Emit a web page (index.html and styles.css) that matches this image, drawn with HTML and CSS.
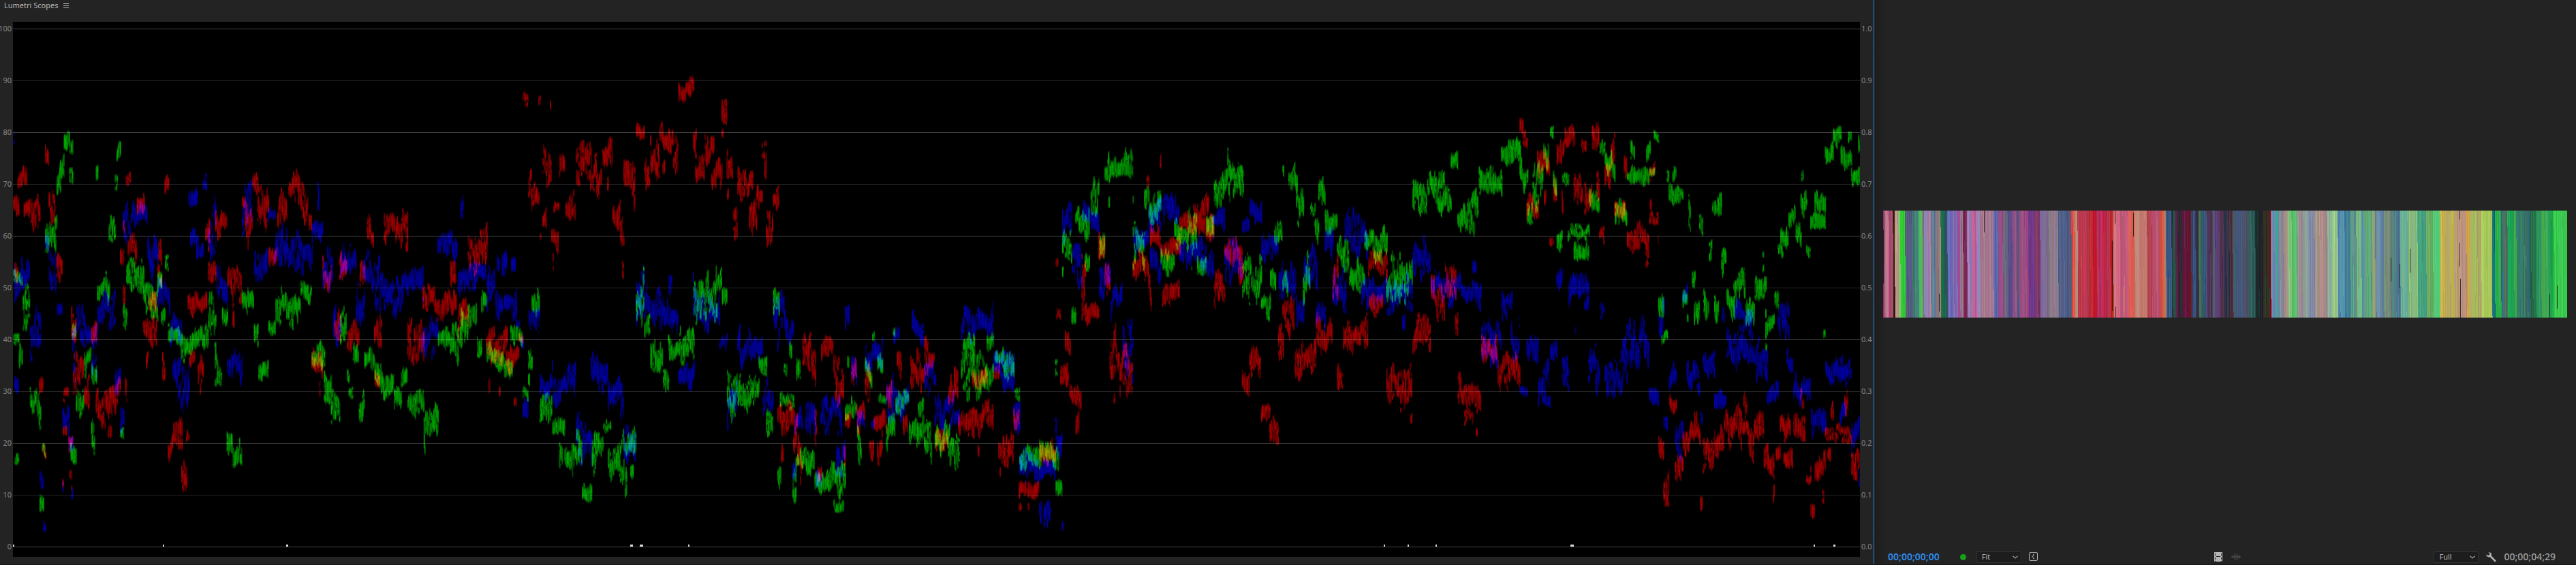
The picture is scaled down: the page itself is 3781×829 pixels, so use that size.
FILE: index.html
```html
<!DOCTYPE html>
<html lang="en">
<head>
<meta charset="utf-8">
<title>Lumetri Scopes</title>
<link rel="stylesheet" href="styles.css">
</head>
<body>
<main class="workspace">
  <section class="panel scopes">
    <header class="panel-header">
      <h1 class="panel-title">Lumetri Scopes</h1>
      <button class="icon-button" aria-label="Panel menu">
        <svg width="8" height="8" viewBox="0 0 8 8"><path d="M0 .5h8M0 3.5h8M0 6.5h8" stroke="#b8b8b8"/></svg>
      </button>
    </header>
    <div class="scope-body">
      <div class="scale scale-left"><span>100</span><span>90</span><span>80</span><span>70</span><span>60</span><span>50</span><span>40</span><span>30</span><span>20</span><span>10</span><span>0</span></div>
      <div class="plot"><canvas id="waveform" class="fill" role="img" aria-label="RGB waveform"></canvas></div>
      <div class="scale scale-right"><span>1.0</span><span>0.9</span><span>0.8</span><span>0.7</span><span>0.6</span><span>0.5</span><span>0.4</span><span>0.3</span><span>0.2</span><span>0.1</span><span>0.0</span></div>
    </div>
  </section>
  <section class="panel monitor">
    <div class="stage"><div class="frame"><canvas id="frame" class="fill" role="img" aria-label="Program frame"></canvas></div></div>
    <footer class="controls">
      <div class="group">
        <button class="timecode current">00;00;00;00</button>
        <span class="status"></span>
        <span class="picker"><select class="zoom-level" aria-label="Zoom level"><option>Fit</option></select><svg class="chevron" width="8" height="5" viewBox="0 0 8 5"><path d="M.5 .7L4 4L7.5 .7" fill="none" stroke="#a0a0a0" stroke-width="1.2"/></svg></span>
        <button class="icon-button" aria-label="Safe margins">
          <svg width="14" height="14" viewBox="0 0 14 14" fill="none" stroke="#b0b0b0"><rect x=".5" y=".5" width="12" height="12" rx="1.5"/><path d="M8 3.2H7.2Q6.3 3.2 6.3 4.2V5.4Q6.3 6.5 4.8 6.5Q6.3 6.5 6.3 7.6V8.8Q6.3 9.8 7.2 9.8H8"/></svg>
        </button>
      </div>
      <div class="group media">
        <button class="icon-button" aria-label="Drag video only">
          <svg width="12" height="14" viewBox="0 0 12 14"><path fill="#b5b5b5" d="M0 0h12v14H0z"/><path d="M1.5 1v13M10.5 1v13" stroke="#232323" stroke-dasharray="1 1"/><path d="M3 6.500h6" stroke="#232323"/></svg>
        </button>
        <button class="icon-button" aria-label="Drag audio only">
          <svg width="14" height="12" viewBox="0 0 14 12"><path d="M0 6h14M2.5 4v4M5.5 1v10M8.5 2v8M11.5 3.500v5" stroke="#5c5c5c" fill="none"/></svg>
        </button>
      </div>
      <div class="group">
        <span class="picker"><select class="resolution" aria-label="Playback resolution"><option>Full</option></select><svg class="chevron" width="8" height="5" viewBox="0 0 8 5"><path d="M.5 .7L4 4L7.5 .7" fill="none" stroke="#a0a0a0" stroke-width="1.2"/></svg></span>
        <button class="icon-button wrench" aria-label="Settings">
          <svg width="15" height="15" viewBox="0 0 15 15"><path fill="#b5b5b5" d="M3.300.2Q6.500-.2 7.600 2.300Q8.200 3.800 7.600 5.300L14.500 12.600Q14.800 14.300 12.800 14.500L5.800 7.200Q3.800 8 2 6.800Q.3 5.700.2 3.400L2.600 5L5 4.400L5.400 2.200Z"/></svg>
        </button>
        <span class="timecode duration">00;00;04;29</span>
      </div>
    </footer>
  </section>
</main>
<script src="scopes.js"></script>
</body>
</html>
```
FILE: styles.css
```css
* { box-sizing: border-box; }
body {
  margin: 0;
  background: #232323;
  color: #b8b8b8;
  font: 11px/14px "Noto Sans", "Open Sans", sans-serif;
}
.workspace {
  display: grid;
  grid-template-columns: minmax(0, 2750fr) minmax(0, 1031fr);
  min-height: 100vh;
  border-bottom: 1px solid #161616;
}
.panel { display: flex; flex-direction: column; min-width: 0; }
.panel-header {
  display: flex;
  align-items: flex-start;
  gap: 8px;
  height: 32px;
  padding: 1px 6px;
}
.panel-title { margin: 0; font-size: 11px; font-weight: 400; line-height: 14px; }
.panel-header .icon-button { padding-top: 4px; }
.icon-button {
  display: flex;
  padding: 0;
  border: 0;
  background: none;
  color: inherit;
}
.scope-body { display: flex; flex: 1; min-height: 0; margin-bottom: 11px; }
.plot { position: relative; flex: 1; min-width: 0; background: #000; }
.fill { position: absolute; inset: 0; width: 100%; height: 100%; }
.scale {
  display: flex;
  flex-direction: column;
  justify-content: space-between;
  padding: 3px 0 8px;
  color: #858585;
  font-size: 11px;
  line-height: 14px;
}
.scale-left { width: 19px; align-items: flex-end; padding-right: 2px; }
.scale-right { width: 20px; align-items: flex-start; padding-left: 2px; }
.monitor {
  border-left: 1px solid #2d8ceb;
  background: linear-gradient(to right, #1d1d1d, #232323 18px);
}
.stage { display: flex; flex: 1; align-items: center; padding: 0 13px 32px; }
.frame { position: relative; width: 100%; aspect-ratio: 1004 / 157; overflow: hidden; }
.controls {
  display: grid;
  grid-template-columns: 1fr auto 1fr;
  align-items: center;
  height: 22px;
  padding: 0 13px 0 20px;
}
.group { display: flex; align-items: center; gap: 11px; }
.group:last-child { justify-content: flex-end; padding-right: 17px; }
.media { gap: 13px; }
.timecode {
  padding: 0;
  border: 0;
  background: none;
  font: 600 14px/18px "Noto Sans", "Open Sans", sans-serif;
}
.current { color: #2d8ceb; }
.duration { color: #a0a0a0; font-weight: 500; }
.status { width: 9px; height: 9px; margin: 0 4px 0 19px; border-radius: 50%; background: #16a016; }
.picker { display: flex; align-items: center; }
.picker select {
  width: 66px;
  height: 17px;
  padding: 0 7px;
  appearance: none;
  border: 1px solid #313131;
  border-radius: 2px;
  background: #1d1d1d;
  color: #b8b8b8;
  font: 11px/14px "Noto Sans", "Open Sans", sans-serif;
}
.chevron { margin: 0 5px 0 -13px; pointer-events: none; }
```
FILE: scopes.js
```javascript
// Small seeded generator so the trace looks the same on every paint.
let seed = 20731;
function rnd() {
  seed = (seed * 1664525 + 1013904223) >>> 0;
  return seed / 4294967296;
}

// Trace patches, four sections from left to right: x0-x1 top-bottom.
const TRACE = [
  {
    r: "44-62 530-610;48-58 720-800;57-90 440-560;78-100 540-615;100-132 540-680;148-160 395-470;160-182 480-640;186-206 700-790;128-142 1040-1105;140-152 1235-1275;207-226 1080-1120;207-222 1180-1230;204-210 1315-1350;225-240 1215-1260;227-238 1310-1355;234-250 840-960;240-252 960-1160;250-276 960-1080;276-296 1040-1130;300-318 860-980;315-382 1075-1195;355-368 1170-1230;378-396 1050-1130;395-408 690-755;404-412 600-650;413-430 480-515;410-418 1020-1150;404-412 790-870;420-450 640-740;450-475 520-640;470-515 870-980;480-488 980-1085;490-515 800-900;518-532 650-850;533-542 950-1100;541-555 470-560;552-570 1180-1320;570-600 1120-1260;596-616 1270-1365;612-622 1175-1225;617-680 810-880;622-640 960-1020;650-668 980-1105;675-692 600-700;683-710 720-780;708-748 560-670;748-795 690-860;765-770 860-915;795-810 545-575;805-830 520-720;830-848 450-540;845-885 455-640;883-910 690-760;912-945 520-650;948-985 470-580;980-1012 490-620;1015-1025 570-640;1024-1062 960-1060;1048-1054 1060-1108;1060-1090 680-840;1098-1120 850-970;1115-1140 690-810;1140-1182 870-980;1182-1200 720-840;1205-1228 600-720;1230-1256 850-1000;1232-1248 1000-1090;1262-1300 570-700;1300-1342 560-700;1338-1395 850-1020;1390-1432 740-900;1430-1500 800-900;1480-1500 730-800;1505-1540 830-950;1538-1568 640-800",
    g: "44-62 930-955;48-62 1260-1285;44-75 750-800;62-75 950-1070;75-98 750-920;98-134 1060-1190;130-145 1350-1420;138-150 1235-1270;148-186 610-730;180-188 580-640;186-200 460-550;195-212 415-500;210-230 345-420;228-240 380-440;228-240 470-508;232-250 1220-1300;236-250 900-950;250-276 1060-1160;276-300 930-1050;300-320 1000-1090;300-312 1160-1270;315-322 445-525;320-362 740-870;357-380 600-690;377-386 480-525;383-398 395-490;395-408 1190-1240;404-418 780-930;415-475 720-810;470-520 790-890;518-532 740-800;530-545 840-900;542-555 710-760;552-600 890-970;595-645 900-1010;640-685 880-980;685-710 800-980;706-730 985-1090;730-748 790-920;745-765 1190-1280;765-786 1220-1300;786-797 1210-1290;795-835 780-870;835-850 890-980;850-882 980-1080;882-905 880-940;905-990 780-910;988-1026 760-850;1025-1068 950-1030;1065-1090 1030-1140;1088-1118 1080-1180;1118-1140 830-950;1140-1150 1020-1070;1146-1160 1080-1120;1160-1180 950-1030;1180-1200 1080-1200;1198-1230 950-1030;1230-1260 1000-1100;1260-1295 1020-1120;1295-1320 1060-1150;1318-1340 1010-1090;1340-1395 1080-1160;1393-1398 1160-1270;1398-1442 1110-1215;1440-1470 900-980;1470-1520 870-1010;1515-1535 850-960;1535-1568 820-950",
    b: "44-48 350-430;45-98 700-850;48-62 1045-1100;98-134 850-1000;148-160 640-700;160-186 700-830;186-205 820-900;130-144 1300-1360;141-152 1435-1475;205-228 1100-1250;225-240 1215-1290;204-210 1340-1372;234-240 1355-1380;238-250 770-1060;250-300 820-960;300-318 900-1100;320-380 810-930;378-396 970-1090;396-408 1100-1200;404-430 560-700;430-485 545-650;485-520 600-800;518-560 750-880;560-600 860-970;568-622 980-1140;620-650 520-575;625-645 635-695;645-670 650-750;666-680 485-535;683-710 545-780;712-748 720-850;746-798 930-1070;795-830 500-660;835-882 680-780;880-905 575-615;900-945 620-760;945-1030 640-770;1025-1062 600-680;1042-1050 485-600;1060-1095 690-820;1095-1120 820-970;1118-1170 660-800;1170-1200 780-940;1190-1250 670-860;1248-1260 700-980;1262-1325 740-900;1320-1392 730-840;1385-1440 880-1020;1438-1505 640-740;1512-1525 535-620;1505-1568 720-820"
  },
  {
    r: "0-34 620-780;30-100 890-1020;38-44 1020-1100;73-77 1060-1120;95-138 940-1035;138-152 920-950;121-130 1100-1125;150-168 252-300;202-209 270-300;240-244 275-300;168-180 460-560;178-206 510-590;215-246 395-560;206-212 640-680;215-230 570-660;245-268 620-705;249-253 700-750;252-272 560-610;270-288 400-500;290-324 520-650;325-378 395-510;372-412 430-560;412-446 385-480;428-434 480-555;445-472 550-655;470-484 600-690;477-482 720-775;482-498 430-510;495-520 420-550;515-520 540-600;523-552 340-410;550-570 410-530;570-600 340-500;600-646 345-430;610-618 430-500;645-662 380-525;662-688 225-298;686-714 212-280;710-722 340-440;718-748 430-530;748-780 345-470;770-806 440-540;804-822 272-350;803-810 350-400;820-842 405-490;822-828 510-570;842-856 560-680;856-908 450-560;895-920 520-650;918-940 500-580;936-952 395-440;945-953 440-500;950-974 580-690;974-994 515-600;988-1045 1100-1210;1000-1008 1200-1280;1040-1070 1120-1390;1070-1098 870-1040;1098-1115 960-1100;1110-1118 1100-1240;1132-1172 900-1010;1120-1134 1280-1360;1172-1206 980-1130;1210-1230 1130-1210;1206-1212 1220-1330;1230-1248 960-1090;1248-1275 1110-1200;1276-1294 960-1110;1290-1305 1200-1275;1305-1348 1140-1200;1315-1334 1190-1300;1346-1366 1020-1140;1380-1396 950-1060;1400-1416 1140-1235;1425-1470 970-1110;1470-1505 930-1060;1508-1550 1170-1270;1550-1568 1030-1170",
    g: "0-16 920-990;14-34 800-880;32-60 930-1030;60-118 970-1050;110-150 900-970;150-168 1078-1110;168-182 950-1080;180-206 790-910;206-248 1090-1200;248-290 1150-1230;270-282 1220-1330;288-320 1190-1340;320-346 1180-1330;346-378 1345-1400;378-418 1170-1320;415-440 1165-1200;430-485 1180-1340;485-524 1180-1280;486-494 1270-1380;505-515 1280-1345;522-550 740-940;550-570 870-960;570-612 930-1070;612-632 1030-1090;628-668 930-1010;665-716 910-1010;712-745 740-900;745-790 740-930;786-806 745-810;806-822 800-860;822-856 1030-1180;856-928 1040-1160;926-955 970-1050;950-974 1120-1210;974-995 800-890;988-1000 1250-1360;996-1045 1090-1140;1008-1020 1015-1060;1026-1036 940-1030;1050-1065 990-1060;1038-1050 1290-1410;1048-1110 1240-1320;1110-1140 1310-1380;1140-1212 1280-1380;1172-1206 1370-1420;1210-1230 1100-1170;1218-1224 980-1040;1230-1250 1100-1170;1250-1265 1150-1320;1276-1300 980-1090;1300-1308 900-950;1316-1335 970-1040;1320-1345 1090-1120;1345-1375 1100-1290;1367-1375 900-930;1376-1420 1070-1150;1420-1470 1140-1240;1450-1470 1100-1160;1470-1495 1160-1290;1505-1568 1170-1300",
    b: "0-30 720-790;32-60 700-900;65-75 690-760;82-98 700-760;113-127 700-760;60-85 790-890;90-132 790-890;128-142 880-905;142-154 930-975;150-168 1100-1170;170-206 840-945;206-250 990-1130;250-325 1010-1130;325-380 1130-1290;375-430 980-1095;430-482 1040-1180;482-524 1160-1300;522-554 725-940;554-604 790-910;600-662 820-940;630-642 750-820;662-716 1000-1080;710-722 745-900;722-800 800-920;796-824 920-970;822-856 1020-1190;856-940 900-1020;940-974 1030-1190;974-1042 810-980;1045-1070 1120-1230;1080-1115 1050-1220;1130-1200 1100-1220;1180-1212 1200-1320;1210-1224 810-920;1038-1048 1260-1350;1115-1135 1300-1355;1230-1250 970-1090;1250-1275 1100-1220;1276-1300 960-1060;1300-1335 920-1020;1345-1375 1020-1170;1370-1390 900-960;1376-1420 1040-1170;1430-1470 860-970;1470-1510 1000-1110;1505-1568 1060-1190;1295-1308 1150-1190"
  },
  {
    r: "0-14 1000-1110;14-22 1130-1210;24-130 1100-1220;78-84 1220-1265;60-110 1020-1080;130-152 1000-1050;146-158 1190-1360;158-198 1190-1330;196-214 1120-1230;214-280 1310-1400;213-222 1400-1412;242-250 1400-1412;280-335 1220-1300;335-342 720-745;337-352 845-885;350-378 1000-1080;365-384 910-1010;380-420 1050-1160;400-412 1140-1210;420-478 810-910;420-434 670-810;474-498 650-720;495-515 700-820;512-545 880-1060;525-530 1090-1130;545-588 940-1110;588-640 690-780;632-642 485-520;678-682 415-480;645-680 620-700;640-650 750-880;680-745 650-730;685-742 780-860;742-830 570-660;800-840 520-640;830-856 580-680;855-892 745-860;890-950 650-760;935-952 720-790;947-972 1020-1100;972-1010 955-1070;1010-1040 1110-1170;1038-1068 1150-1230;1066-1085 860-1020;1080-1120 820-940;1120-1150 950-1070;1150-1192 930-1060;1190-1245 870-1000;1245-1265 710-860;1260-1280 1000-1100;1280-1362 870-990;1362-1425 680-790;1365-1410 800-880;1422-1450 940-1120;1450-1508 980-1150;1500-1508 1140-1170;1508-1568 860-1000",
    g: "0-18 1200-1320;24-130 970-1110;30-70 920-1000;108-132 920-990;134-160 965-1020;160-200 960-1130;200-216 1075-1115;216-245 1205-1310;245-285 1240-1300;280-320 1215-1300;320-345 1210-1330;335-356 1310-1380;333-341 1000-1040;356-388 630-800;386-402 845-900;400-446 560-680;430-446 680-780;450-478 485-600;478-496 610-720;496-505 460-520;505-588 415-510;507-513 540-570;588-592 530-780;592-628 590-770;626-642 500-590;640-682 530-620;680-725 680-770;725-760 610-690;760-800 580-750;800-830 680-770;830-856 585-650;855-890 480-580;890-920 405-560;918-952 415-580;948-978 660-860;978-1012 690-860;1010-1042 790-890;1040-1058 750-820;1054-1080 590-680;1080-1085 460-500;1080-1100 740-850;1100-1130 455-550;1125-1150 490-630;1148-1172 690-860;1172-1186 550-600;1186-1200 490-700;1198-1222 460-590;1220-1262 570-650;1260-1300 620-760;1300-1350 700-830;1350-1380 620-720;1380-1425 620-740;1422-1470 700-860;1465-1508 690-870;1508-1530 490-610;1530-1556 500-620;1556-1568 470-540",
    b: "0-20 1100-1220;24-130 840-960;130-200 940-1050;160-200 1020-1090;195-218 1100-1220;216-280 1210-1340;280-335 1270-1340;280-290 1370-1450;295-318 1370-1465;333-356 1160-1270;355-360 1450-1475;356-388 560-700;388-422 680-800;422-450 550-640;450-478 590-660;478-515 720-840;515-555 760-900;555-590 860-1060;590-640 610-720;640-682 550-640;680-742 530-630;645-682 650-790;742-830 650-770;830-856 650-820;850-892 570-650;890-950 660-790;948-972 600-660;972-1014 550-630;1010-1068 650-740;1068-1125 690-840;1125-1152 820-930;1150-1195 680-800;1190-1222 820-920;1220-1248 600-730;1245-1290 720-870;1285-1360 580-740;1340-1425 750-870;1422-1508 740-870;1475-1485 860-920;1508-1568 650-780"
  },
  {
    r: "0-45 740-900;45-85 730-850;80-90 840-950;88-166 1030-1160;110-140 1140-1180;149-154 1190-1215;166-220 920-1030;220-262 980-1120;262-294 960-1070;292-304 325-380;302-318 360-410;314-355 540-640;350-392 400-500;372-380 480-600;390-404 645-680;402-414 480-590;414-440 390-460;430-436 520-610;440-474 350-430;470-500 470-590;495-512 390-425;505-530 500-590;530-554 345-430;545-556 420-600;554-570 630-675;572-592 430-530;592-606 335-460;604-640 560-620;635-646 430-520;645-718 610-710;706-716 700-740;718-748 590-620;718-740 450-500;720-728 540-580;746-750 650-680;748-768 1180-1290;765-785 1270-1400;785-808 1075-1170;803-830 1260-1350;828-850 1200-1270;850-886 1135-1270;886-894 1355-1415;894-930 1220-1320;930-965 1160-1270;965-1010 1110-1250;1010-1070 1090-1280;1070-1095 1120-1230;1095-1130 1230-1340;1125-1130 1310-1400;1135-1150 1210-1290;1148-1182 1140-1230;1160-1190 1240-1300;1192-1232 1140-1220;1215-1228 1080-1130;1234-1250 1290-1340;1248-1262 1395-1450;1262-1298 1230-1370;1286-1294 1360-1400;1296-1325 1190-1230;1305-1316 1220-1300;1315-1325 1090-1190;1328-1385 1180-1230;1360-1372 1070-1150;1382-1411 1250-1330",
    g: "0-45 460-560;20-68 520-600;66-90 415-490;88-122 560-650;120-158 520-650;158-235 460-550;232-296 385-460;292-320 430-540;316-335 550-670;335-370 420-620;370-390 380-490;392-404 355-385;402-415 460-590;414-432 630-700;432-456 480-530;450-522 625-670;470-520 670-730;520-554 520-610;555-575 385-430;572-606 420-520;606-645 540-640;645-718 460-520;656-670 390-450;708-722 370-480;718-738 460-500;732-752 358-400;748-768 810-880;758-780 920-960;776-784 465-500;782-830 500-570;795-808 440-510;828-845 790-860;842-848 860-910;847-855 540-670;858-870 725-800;865-885 800-930;883-896 600-680;896-915 770-940;915-924 640-725;925-940 545-610;932-946 790-910;942-956 540-630;955-972 670-770;972-1000 790-890;995-1035 740-880;1035-1065 820-940;1065-1105 740-840;1090-1096 700-750;1100-1130 840-940;1100-1106 950-980;1130-1145 800-870;1140-1158 680-720;1150-1176 600-700;1176-1200 560-650;1200-1218 600-710;1216-1238 530-600;1218-1225 470-500;1234-1248 680-720;1248-1298 580-640;1262-1298 530-600;1290-1297 920-945;1296-1325 390-460;1322-1350 355-410;1348-1384 390-490;1372-1384 365-400;1382-1411 460-520;1405-1411 370-430",
    b: "0-85 740-850;85-166 760-860;138-150 700-780;166-235 880-1000;195-220 960-1030;232-268 790-890;262-292 860-1000;292-318 1075-1115;315-355 920-1010;352-388 1000-1130;365-396 1100-1130;392-418 950-1010;414-432 730-820;430-456 960-1100;452-520 730-870;474-477 900-930;505-520 820-880;556-572 845-885;518-556 950-1110;572-606 980-1110;606-648 940-1130;630-718 880-1040;718-750 1060-1135;750-768 820-930;765-780 1160-1200;783-808 1000-1120;803-830 1130-1290;828-845 785-850;842-885 990-1120;885-896 1140-1190;895-935 960-1060;932-972 1080-1140;956-966 850-900;972-1080 900-1030;1000-1060 830-920;1070-1110 960-1080;1105-1145 1060-1120;1140-1180 840-980;1170-1192 960-1060;1192-1250 1020-1140;1250-1300 1110-1220;1298-1345 970-1090;1345-1384 980-1100;1345-1365 1110-1190;1382-1411 1120-1260;1408-1411 1260-1380"
  }
];

// Clipped samples resting on the zero line: section, x, width.
const SPECKS = [[0,45,2],[0,538,2],[0,943,3],[1,507,4],[1,538,5],[1,697,2],[2,1415,2],[2,1495,2],[3,18,2],[3,461,5],[3,1261,2],[3,1327,3]];
const SX = 700 / 1568, SY = 829 / 1568;

function open2d(canvas, w, h) {
  const box = canvas.parentElement;
  canvas.width = box.clientWidth;
  canvas.height = box.clientHeight;
  const ctx = canvas.getContext("2d");
  ctx.scale(canvas.width / w, canvas.height / h);
  return ctx;
}

function drawPatch(ctx, color, x0, x1, top, bottom) {
  const full = bottom - top;
  // Tall patches get a ragged outline: the band drifts and narrows by column.
  const slack = full > 30 ? full * .34 : full * .08;
  const tint = v => color === "r" ? `rgb(${v},0,0)` : color === "g" ? `rgb(0,${v},0)` : `rgb(0,0,${v})`;
  let a = rnd(), b = rnd();
  const passes = full > 30 ? 3 : 2;
  const ys = Array.from({ length: passes }, rnd);
  for (let x = x0; x < x1; x += 1) {
    a = rnd() < .16 ? rnd() : Math.max(0, Math.min(1, a + (rnd() - .5) * .5));
    b = rnd() < .16 ? rnd() : Math.max(0, Math.min(1, b + (rnd() - .5) * .5));
    const hi = top - 3 + a * slack * 1.2;
    const lo = bottom + 3 - b * slack * 1.2;
    const h = lo - hi;
    for (let p = 0; p < passes; p++) {
      ys[p] = rnd() < .16 ? rnd() : Math.max(0, Math.min(1, ys[p] + (rnd() - .5) * .3));
      const len = Math.min(h, 5 + rnd() * (full > 30 ? 19 : 9));
      const y = hi + ys[p] * (h - len);
      const l = (65 + rnd() * 105) | 0;
      ctx.fillStyle = tint(l >> 1);
      ctx.fillRect(x, y, 2, len);
      ctx.fillStyle = tint(l);
      ctx.fillRect(x, y + 2, 1.5, Math.max(1, len - 4));
    }
  }
}

function drawWaveform() {
  seed = 20731;
  const ctx = open2d(document.getElementById("waveform"), 2711, 785);
  // Channels combine by maximum, so overlaps mix hue without clipping.
  ctx.globalCompositeOperation = "lighten";
  TRACE.forEach((section, i) => {
    for (const color of ["r", "g", "b"]) {
      for (const patch of section[color].split(";")) {
        const [x0, x1, y0, y1] = patch.split(/[- ]/).map(Number);
        drawPatch(ctx, color, i * 700 + x0 * SX - 19, i * 700 + x1 * SX - 20, y0 * SY - 33, y1 * SY - 31);
      }
    }
  });
  ctx.globalCompositeOperation = "source-over";
  for (let i = 0; i <= 10; i++) {
    ctx.fillStyle = i % 2 ? "rgba(255,255,255,.14)" : "rgba(255,255,255,.26)";
    ctx.fillRect(0, 10 + i * 76, 2711, 1);
  }
  ctx.fillStyle = "#d8d8d8";
  for (const [i, x, w] of SPECKS) ctx.fillRect(Math.round(i * 700 + x * SX - 20), 767, w, 3);
}

// Colour runs of the frame: start position, colour.
const LEFT = "67 8f3560,72 c07088,92 a0476a,108 3a2010,115 b89a88,130 90c080,140 30cc30,157 60506a,165 4d5a80,190 3f8078,215 50b860,230 8a5a80,238 9080b0,255 b08090,265 5a7a98,285 8a8080,301 b09080,304 1f6a50,320 2a6050,333 6a6ab8,355 8068b0,375 a05098,386 8a7080,395 80255a,414 9a80b0,432 c06090,455 9080b8,465 a87890,522 5868a8,538 985088,562 707080,577 5a4a88,600 90507c,617 5a5a88,628 9a4c80,666 6a4088,690 803868,712 7a6898,750 8a7888,788 50608a,825 58607a,842 e05048,856 b09070,867 b83850,905 b03040,920 c83030,932 c01830,946 b03060,965 c82848,980 b02848,1000 b82828,1014 d07080,1040 c05a78,1077 e06050,1102 c08070,1152 b04050,1172 b85070,1205 d05848,1222 a87860,1232 385888,1253 402030,1258 106040,1267 502040,1282 2c2428,1297 681848,1318 601828,1333 3a4878,1350 303040,1365 406050,1380 305070,1395 503850,1420 505068,1432 583880,1450 503050,1470 303048,1492 50303a,1508 405878,1530 406878";
const RIGHT = "0 483868,10 503870,28 682c58,45 303040,60 383038,72 582c38,84 405878,115 485070,140 50505a,148 286060,165 305858,178 202c30,210 302c1c,240 900018,248 6090b0,270 40a088,280 8888a0,300 a09080,320 80c080,335 58c068,360 9a8898,385 90a890,407 8088a8,435 a89088,460 a88888,490 88b098,510 98c888,537 5088a8,565 407898,592 58a880,605 608888,615 70b880,638 5a90a0,650 60a878,685 90a070,697 6a88a0,738 808c78,767 508080,790 4a7898,808 68b090,840 88b880,882 48a080,920 68b060,950 58c878,980 d0b050,1000 b8a860,1030 c0b848,1040 b89870,1060 c09080,1095 d0a040,1110 a8b860,1140 a8a060,1160 a8c858,1205 186878,1218 28b048,1245 3a7080,1255 507060,1270 20a050,1300 30a848,1310 3a7a68,1350 38706a,1372 287048,1397 309868,1420 40a850,1450 20a850,1470 38c850,1500 38cc50,1525 28c030";
const MARKS = [[148,0,32],[340,0,19],[336,44,147],[367,3,38],[341,141,157],[0,28,107],[82,122,148],[745,69,104],[758,78,113],[773,56,91],[846,0,13],[846,47,82],[847,100,157],[978,122,157],[989,110,144]];

function drawFrame() {
  seed = 911;
  const ctx = open2d(document.getElementById("frame"), 1004, 157);
  const parse = (s, f) => s.split(",").map(v => { const [x, c] = v.split(" "); return [f(+x), parseInt(c, 16)]; });
  const runs = parse(LEFT, x => x / 2.8 - 24).concat(parse(RIGHT, x => 486 + x / 2.953));
  let k = 0;
  for (let x = 0; x < 1004; x++) {
    while (k + 1 < runs.length && runs[k + 1][0] <= x) k++;
    const c = runs[k][1];
    const tone = (rnd() - .5) * 16;
    const rgb = [c >> 16, c >> 8 & 255, c & 255].map(v => Math.max(0, Math.min(255, Math.round(v + tone + (rnd() - .5) * 24))));
    ctx.fillStyle = `rgb(${rgb})`;
    ctx.fillRect(x, 0, 2, 157);
    // Each column bleeds one pixel left above a random row.
    const y = rnd() * 157;
    if (x) ctx.fillRect(x - 1, 0, 1, y);
  }
  ctx.fillStyle = "rgba(15,15,15,.75)";
  for (const [x, y0, y1] of MARKS) ctx.fillRect(x, y0, 1, y1 - y0);
}

function draw() { drawWaveform(); drawFrame(); }
draw();
window.addEventListener("resize", draw);
```
